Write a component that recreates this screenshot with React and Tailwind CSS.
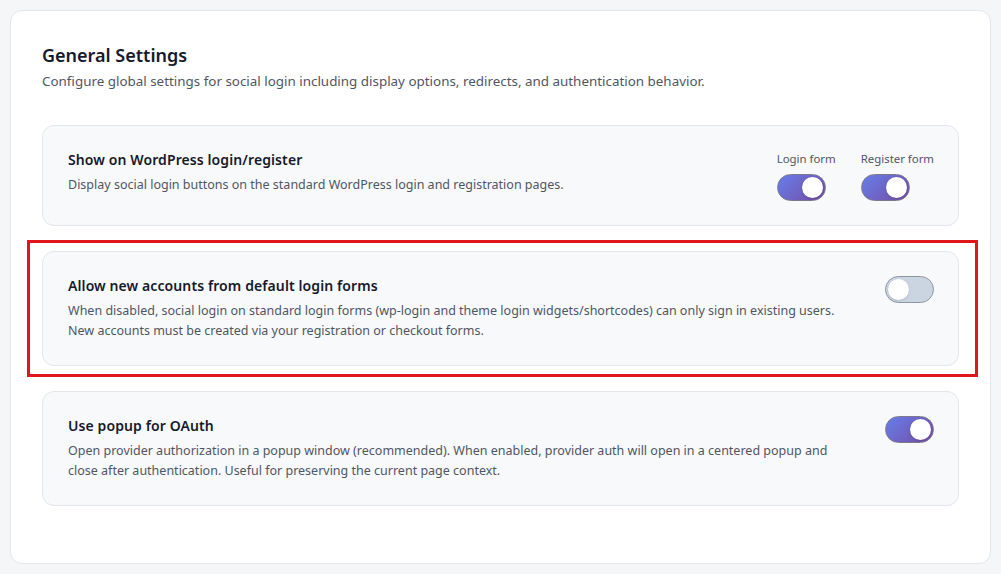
import React from "react";

function Toggle({ on }) {
  return (
    <div
      className={
        "relative w-[49px] h-[27px] rounded-full border shrink-0 " +
        (on
          ? "border-[#7a7a8c] bg-[linear-gradient(135deg,#667eea_0%,#764ba2_100%)]"
          : "border-[#8e96a3] bg-[#cbd5e1]")
      }
    >
      <div
        className={
          "absolute top-[2px] w-[21px] h-[21px] rounded-full bg-white shadow-sm " +
          (on ? "right-[2px]" : "left-[2px]")
        }
      />
    </div>
  );
}

function Card({ title, children, right }) {
  return (
    <div className="flex items-start justify-between gap-6 rounded-xl border border-[#e3e6ea] bg-[#f8f9fb] pl-[25px] pr-6 py-6">
      <div className="flex-1 min-w-0">
        <div className="text-[14px] leading-5 font-semibold tracking-[0.1px] text-[#161a2b]">{title}</div>
        <div className="mt-[5px] text-[12.5px] leading-5 text-[#4f5663]">{children}</div>
      </div>
      {right}
    </div>
  );
}

export default function App() {
  return (
    <div
      className="min-h-screen bg-[#f5f6f8] p-[10px]"
      style={{ fontFamily: '"Noto Sans", "Open Sans", sans-serif' }}
    >
      <div className="rounded-xl border border-[#e3e6ea] bg-white px-[31px] pt-[32px] pb-[57px]">
        <h1 className="text-[18px] leading-6 font-semibold text-[#161a2b]">General Settings</h1>
        <p className="mt-1 text-[13.4px] leading-5 text-[#4f5663]">
          Configure global settings for social login including display options, redirects, and authentication behavior.
        </p>
        <div className="mt-[34px] flex flex-col gap-[25px]">
          <Card
            title="Show on WordPress login/register"
            right={
              <div className="flex gap-[25px]">
                <div className="flex flex-col items-start gap-[6px]">
                  <span className="text-[11.4px] leading-[18px] text-[#4f5663]">Login form</span>
                  <Toggle on />
                </div>
                <div className="flex flex-col items-start gap-[6px]">
                  <span className="text-[11.4px] leading-[18px] text-[#4f5663]">Register form</span>
                  <Toggle on />
                </div>
              </div>
            }
          >
            Display social login buttons on the standard WordPress login and registration pages.
          </Card>
          <div className="relative">
            <Card title="Allow new accounts from default login forms" right={<Toggle on={false} />}>
              When disabled, social login on standard login forms (wp-login and theme login widgets/shortcodes) can only sign in existing users.
              <br />
              New accounts must be created via your registration or checkout forms.
            </Card>
            <div className="pointer-events-none absolute -left-[15px] -right-[19px] -top-[11px] -bottom-[11px] border-[3px] border-[#e0161b]" />
          </div>
          <Card title="Use popup for OAuth" right={<Toggle on />}>
            Open provider authorization in a popup window (recommended). When enabled, provider auth will open in a centered popup and
            <br />
            close after authentication. Useful for preserving the current page context.
          </Card>
        </div>
      </div>
    </div>
  );
}
